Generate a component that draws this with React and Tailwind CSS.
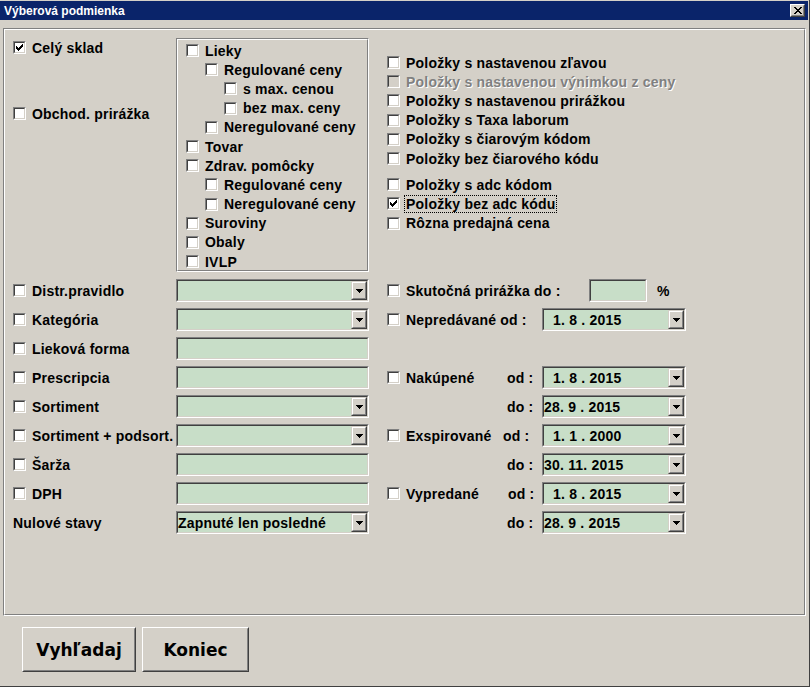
import React from 'react';

const sunkenOuter = 'border border-t-[#808080] border-l-[#808080] border-r-white border-b-white';
const sunkenInner = 'border border-t-[#404040] border-l-[#404040] border-r-[#d4d0c8] border-b-[#d4d0c8]';
const raisedOuter = 'border border-t-[#d4d0c8] border-l-[#d4d0c8] border-r-[#404040] border-b-[#404040]';
const raisedInner = 'border border-t-white border-l-white border-r-[#808080] border-b-[#808080]';
const etchedOuter = 'border border-t-[#808080] border-l-[#808080] border-r-white border-b-white';
const etchedInner = 'border border-t-white border-l-white border-r-[#808080] border-b-[#808080]';
const label = 'text-[14px] leading-none font-bold tracking-[0.2px] whitespace-nowrap';

const Box = ({ checked, disabled }) => (
  <span className={`flex w-[13px] h-[13px] shrink-0 ${sunkenOuter}`}>
    <span className={`flex flex-1 items-center justify-center ${sunkenInner} ${disabled ? 'bg-[#d4d0c8]' : 'bg-white'}`}>
      {checked && (
        <svg width="7" height="7" viewBox="0 0 7 7" shapeRendering="crispEdges">
          <path d="M6 0h1v1h-1z M5 1h2v1h-2z M0 2h1v1h-1z M4 2h3v1h-3z M0 3h2v1h-2z M3 3h3v1h-3z M0 4h5v1h-5z M1 5h3v1h-3z M2 6h1v1h-1z" fill="#000" />
        </svg>
      )}
    </span>
  </span>
);

const Check = ({ text, checked, disabled, focus, className = '' }) => (
  <div className={`flex items-center gap-[6px] ${className}`}>
    <Box checked={checked} disabled={disabled} />
    <span
      className={`${label} ${disabled ? 'text-[#808080] [text-shadow:1px_1px_0_#ffffff]' : 'text-black'} ${
        focus ? 'border border-dotted border-black px-[1px] py-[1px] -ml-[2px]' : ''
      }`}
    >
      {text}
    </span>
  </div>
);

const DropBtn = () => (
  <span className={`flex w-[16px] self-stretch ${raisedOuter}`}>
    <span className={`flex flex-1 items-center justify-center bg-[#d4d0c8] ${raisedInner}`}>
      <svg width="7" height="4" viewBox="0 0 7 4" shapeRendering="crispEdges">
        <path d="M0 0h7v1h-1v1h-1v1h-1v1h-1v-1h-1v-1h-1v-1h-1z" fill="#000" />
      </svg>
    </span>
  </span>
);

const Field = ({ className = '', value = '', combo, pad = 'pl-0' }) => (
  <div className={`flex h-[23px] shrink-0 ${sunkenOuter} ${className}`}>
    <div className={`flex flex-1 items-center bg-[#c8dec8] ${sunkenInner}`}>
      <span className={`flex-1 ${label} whitespace-pre ${pad}`}>{value}</span>
      {combo && <DropBtn />}
    </div>
  </div>
);

const Btn = ({ text, className }) => (
  <div className={`flex h-[45px] ${className} border border-t-white border-l-white border-r-[#404040] border-b-[#404040]`}>
    <div className="flex flex-1 items-center justify-center pt-[3px] border border-t-[#d4d0c8] border-l-[#d4d0c8] border-r-[#808080] border-b-[#808080]">
      <span className="[font-family:'DejaVu_Sans',Verdana,sans-serif] font-bold text-[17px] text-black">{text}</span>
    </div>
  </div>
);

const tree = [
  { t: 'Lieky', l: 0 },
  { t: 'Regulované ceny', l: 1 },
  { t: 's max. cenou', l: 2 },
  { t: 'bez max. ceny', l: 2 },
  { t: 'Neregulované ceny', l: 1 },
  { t: 'Tovar', l: 0 },
  { t: 'Zdrav. pomôcky', l: 0 },
  { t: 'Regulované ceny', l: 1 },
  { t: 'Neregulované ceny', l: 1 },
  { t: 'Suroviny', l: 0 },
  { t: 'Obaly', l: 0 },
  { t: 'IVLP', l: 0 },
];

const indent = ['pl-0', 'pl-[19px]', 'pl-[38px]'];

const leftRows = [
  { t: 'Distr.pravidlo', combo: true },
  { t: 'Kategória', combo: true },
  { t: 'Lieková forma' },
  { t: 'Prescripcia' },
  { t: 'Sortiment', combo: true },
  { t: 'Sortiment + podsort.', combo: true },
  { t: 'Šarža' },
  { t: 'DPH' },
];

export default function App() {
  return (
    <div className="w-[810px] h-[687px] bg-[#d4d0c8] pt-[1px] border-r border-b border-[#404040] [font-family:'Liberation_Sans',Arial,sans-serif] flex flex-col">
      {/* title bar */}
      <div className="h-[19px] bg-[#0a246a] flex items-center justify-between pl-[4px] mr-[1px]">
        <span className="text-white font-bold text-[12px] leading-none">Výberová podmienka</span>
        <span className={`flex w-[15px] h-[13px] mr-[3px] border border-t-white border-l-white border-r-[#404040] border-b-[#404040]`}>
          <span className="flex flex-1 items-center justify-center bg-[#d4d0c8] border border-t-[#d4d0c8] border-l-[#d4d0c8] border-r-[#808080] border-b-[#808080]">
            <svg width="8" height="7" viewBox="0 0 8 7" shapeRendering="crispEdges">
              <path d="M0 0h2v1h1v1h2v-1h1v-1h2v1h-1v1h-1v1h-1v1h1v1h1v1h1v1h-2v-1h-1v-1h-2v1h-1v1h-2v-1h1v-1h1v-1h1v-1h-1v-1h-1v-1h-1z" fill="#000" />
            </svg>
          </span>
        </span>
      </div>

      {/* main group */}
      <div className={`mt-[8px] ml-[3px] w-[803px] h-[588px] ${etchedOuter}`}>
        <div className={`w-full h-full ${etchedInner}`}>
          {/* top part */}
          <div className="flex pt-[8px]">
            <div className="w-[171px] pl-[8px] shrink-0">
              <Check text="Celý sklad" checked className="h-[19px]" />
              <Check text="Obchod. prirážka" className="h-[19px] mt-[47px]" />
            </div>

            <div className={`w-[193px] h-[234px] shrink-0 ${etchedOuter}`}>
              <div className={`w-full h-full pl-[8px] pt-[1px] ${etchedInner}`}>
                {tree.map((n, i) => (
                  <div key={i} className={indent[n.l]}>
                    <Check text={n.t} className="h-[19.2px]" />
                  </div>
                ))}
              </div>
            </div>

            <div className="ml-[18px] mt-[15px]">
              <Check text="Položky s nastavenou zľavou" className="h-[19.2px]" />
              <Check text="Položky s nastavenou výnimkou z ceny" disabled className="h-[19.2px]" />
              <Check text="Položky s nastavenou prirážkou" className="h-[19.2px]" />
              <Check text="Položky s Taxa laborum" className="h-[19.2px]" />
              <Check text="Položky s čiarovým kódom" className="h-[19.2px]" />
              <Check text="Položky bez čiarového kódu" className="h-[19.2px]" />
              <div className="h-[7px]" />
              <Check text="Položky s adc kódom" className="h-[19.2px]" />
              <Check text="Položky bez adc kódu" checked focus className="h-[19.2px]" />
              <Check text="Rôzna predajná cena" className="h-[19.2px]" />
            </div>
          </div>

          {/* bottom part */}
          <div className="flex mt-[7px]">
            <div className="w-[364px] pl-[8px] shrink-0 flex flex-col gap-[6px]">
              {leftRows.map((r) => (
                <div key={r.t} className="flex items-center h-[23px]">
                  <Check text={r.t} className="w-[163px] shrink-0" />
                  <Field className="w-[193px]" combo={r.combo} />
                </div>
              ))}
              <div className="flex items-center h-[23px]">
                <span className={`${label} w-[163px] shrink-0`}>Nulové stavy</span>
                <Field className="w-[193px]" combo value="Zapnuté len posledné" />
              </div>
            </div>

            <div className="ml-[18px] flex flex-col gap-[6px]">
              <div className="flex items-center h-[23px]">
                <Check text="Skutočná prirážka do :" className="w-[202px] shrink-0" />
                <Field className="w-[58px]" />
                <span className={`${label} ml-[10px]`}>%</span>
              </div>
              <div className="flex items-center h-[23px]">
                <Check text="Nepredávané od :" className="w-[155px] shrink-0" />
                <Field className="w-[144px]" combo value="1. 8 . 2015" pad="pl-[9px]" />
              </div>
              <div className="h-[23px]" />
              <div className="flex items-center h-[23px]">
                <Check text="Nakúpené" className="w-[120px] shrink-0" />
                <span className={`${label} w-[35px] shrink-0`}>od :</span>
                <Field className="w-[144px]" combo value="1. 8 . 2015" pad="pl-[9px]" />
              </div>
              <div className="flex items-center h-[23px]">
                <span className="w-[120px] shrink-0" />
                <span className={`${label} w-[35px] shrink-0`}>do :</span>
                <Field className="w-[144px]" combo value="28. 9 . 2015" />
              </div>
              <div className="flex items-center h-[23px]">
                <Check text="Exspirované" className="w-[116px] shrink-0" />
                <span className={`${label} w-[39px] shrink-0`}>od :</span>
                <Field className="w-[144px]" combo value="1. 1 . 2000" pad="pl-[9px]" />
              </div>
              <div className="flex items-center h-[23px]">
                <span className="w-[120px] shrink-0" />
                <span className={`${label} w-[35px] shrink-0`}>do :</span>
                <Field className="w-[144px]" combo value="30. 11. 2015" />
              </div>
              <div className="flex items-center h-[23px]">
                <Check text="Vypredané" className="w-[121px] shrink-0" />
                <span className={`${label} w-[34px] shrink-0`}>od :</span>
                <Field className="w-[144px]" combo value="1. 8 . 2015" pad="pl-[9px]" />
              </div>
              <div className="flex items-center h-[23px]">
                <span className="w-[120px] shrink-0" />
                <span className={`${label} w-[35px] shrink-0`}>do :</span>
                <Field className="w-[144px]" combo value="28. 9 . 2015" />
              </div>
            </div>
          </div>
        </div>
      </div>

      {/* buttons */}
      <div className="flex gap-[6px] ml-[22px] mt-[11px]">
        <Btn text="Vyhľadaj" className="w-[114px]" />
        <Btn text="Koniec" className="w-[107px]" />
      </div>
    </div>
  );
}
